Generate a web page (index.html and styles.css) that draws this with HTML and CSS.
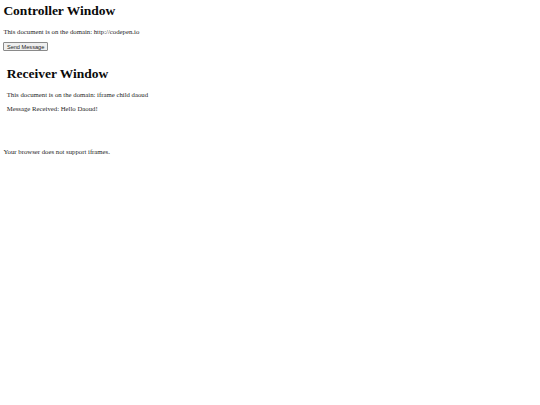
FILE: index.html
```html
<!DOCTYPE html>
<html>
<head>
<meta charset="utf-8">
<title>Controller Window</title>
<link rel="stylesheet" href="styles.css">
</head>
<body class="page">
  <h1 class="title title-main">Controller Window</h1>
  <p class="text">This document is on the domain: http://codepen.io</p>
  <div class="actions"><button class="btn" type="button">Send Message</button></div>
  <div class="frame">
    <h1 class="title">Receiver Window</h1>
    <p class="text">This document is on the domain: iframe child daoud</p>
    <p class="text">Message Received: Hello Daoud!</p>
  </div>
  <p class="text fallback">Your browser does not support iframes.</p>
</body>
</html>
```

FILE: styles.css
```css
html {
  background: #ffffff;
}

.page {
  margin: 3.375px;
  font-family: "Liberation Serif", "Times New Roman", serif;
  font-size: 6.75px;
  line-height: normal;
  color: #1e1e1e;
}

.title {
  font-size: 13.5px;
  font-weight: bold;
  margin: 9.05px 0;
  line-height: normal;
  color: #0a0a0a;
}

.title-main {
  margin-top: 0;
}

.text {
  margin: 6.75px 0;
}

.actions {
  display: flex;
}

.btn {
  font-family: "Liberation Sans", Arial, sans-serif;
  font-size: 5.625px;
  line-height: normal;
  padding: 0.42px 2.53px;
  border: 1px solid #8a8a8a;
  border-radius: 1px;
  background: #efefef;
  color: #222222;
  margin: 0;
}

.frame {
  display: flow-root;
  margin-top: 5.6px;
  height: 63.3px;
  padding: 0 3.375px;
}

.frame .title {
  margin: 9.05px 0;
}

.frame .text {
  margin: 7.6px 0;
}

.fallback {
  margin: 28.5px 0 0;
}
```
